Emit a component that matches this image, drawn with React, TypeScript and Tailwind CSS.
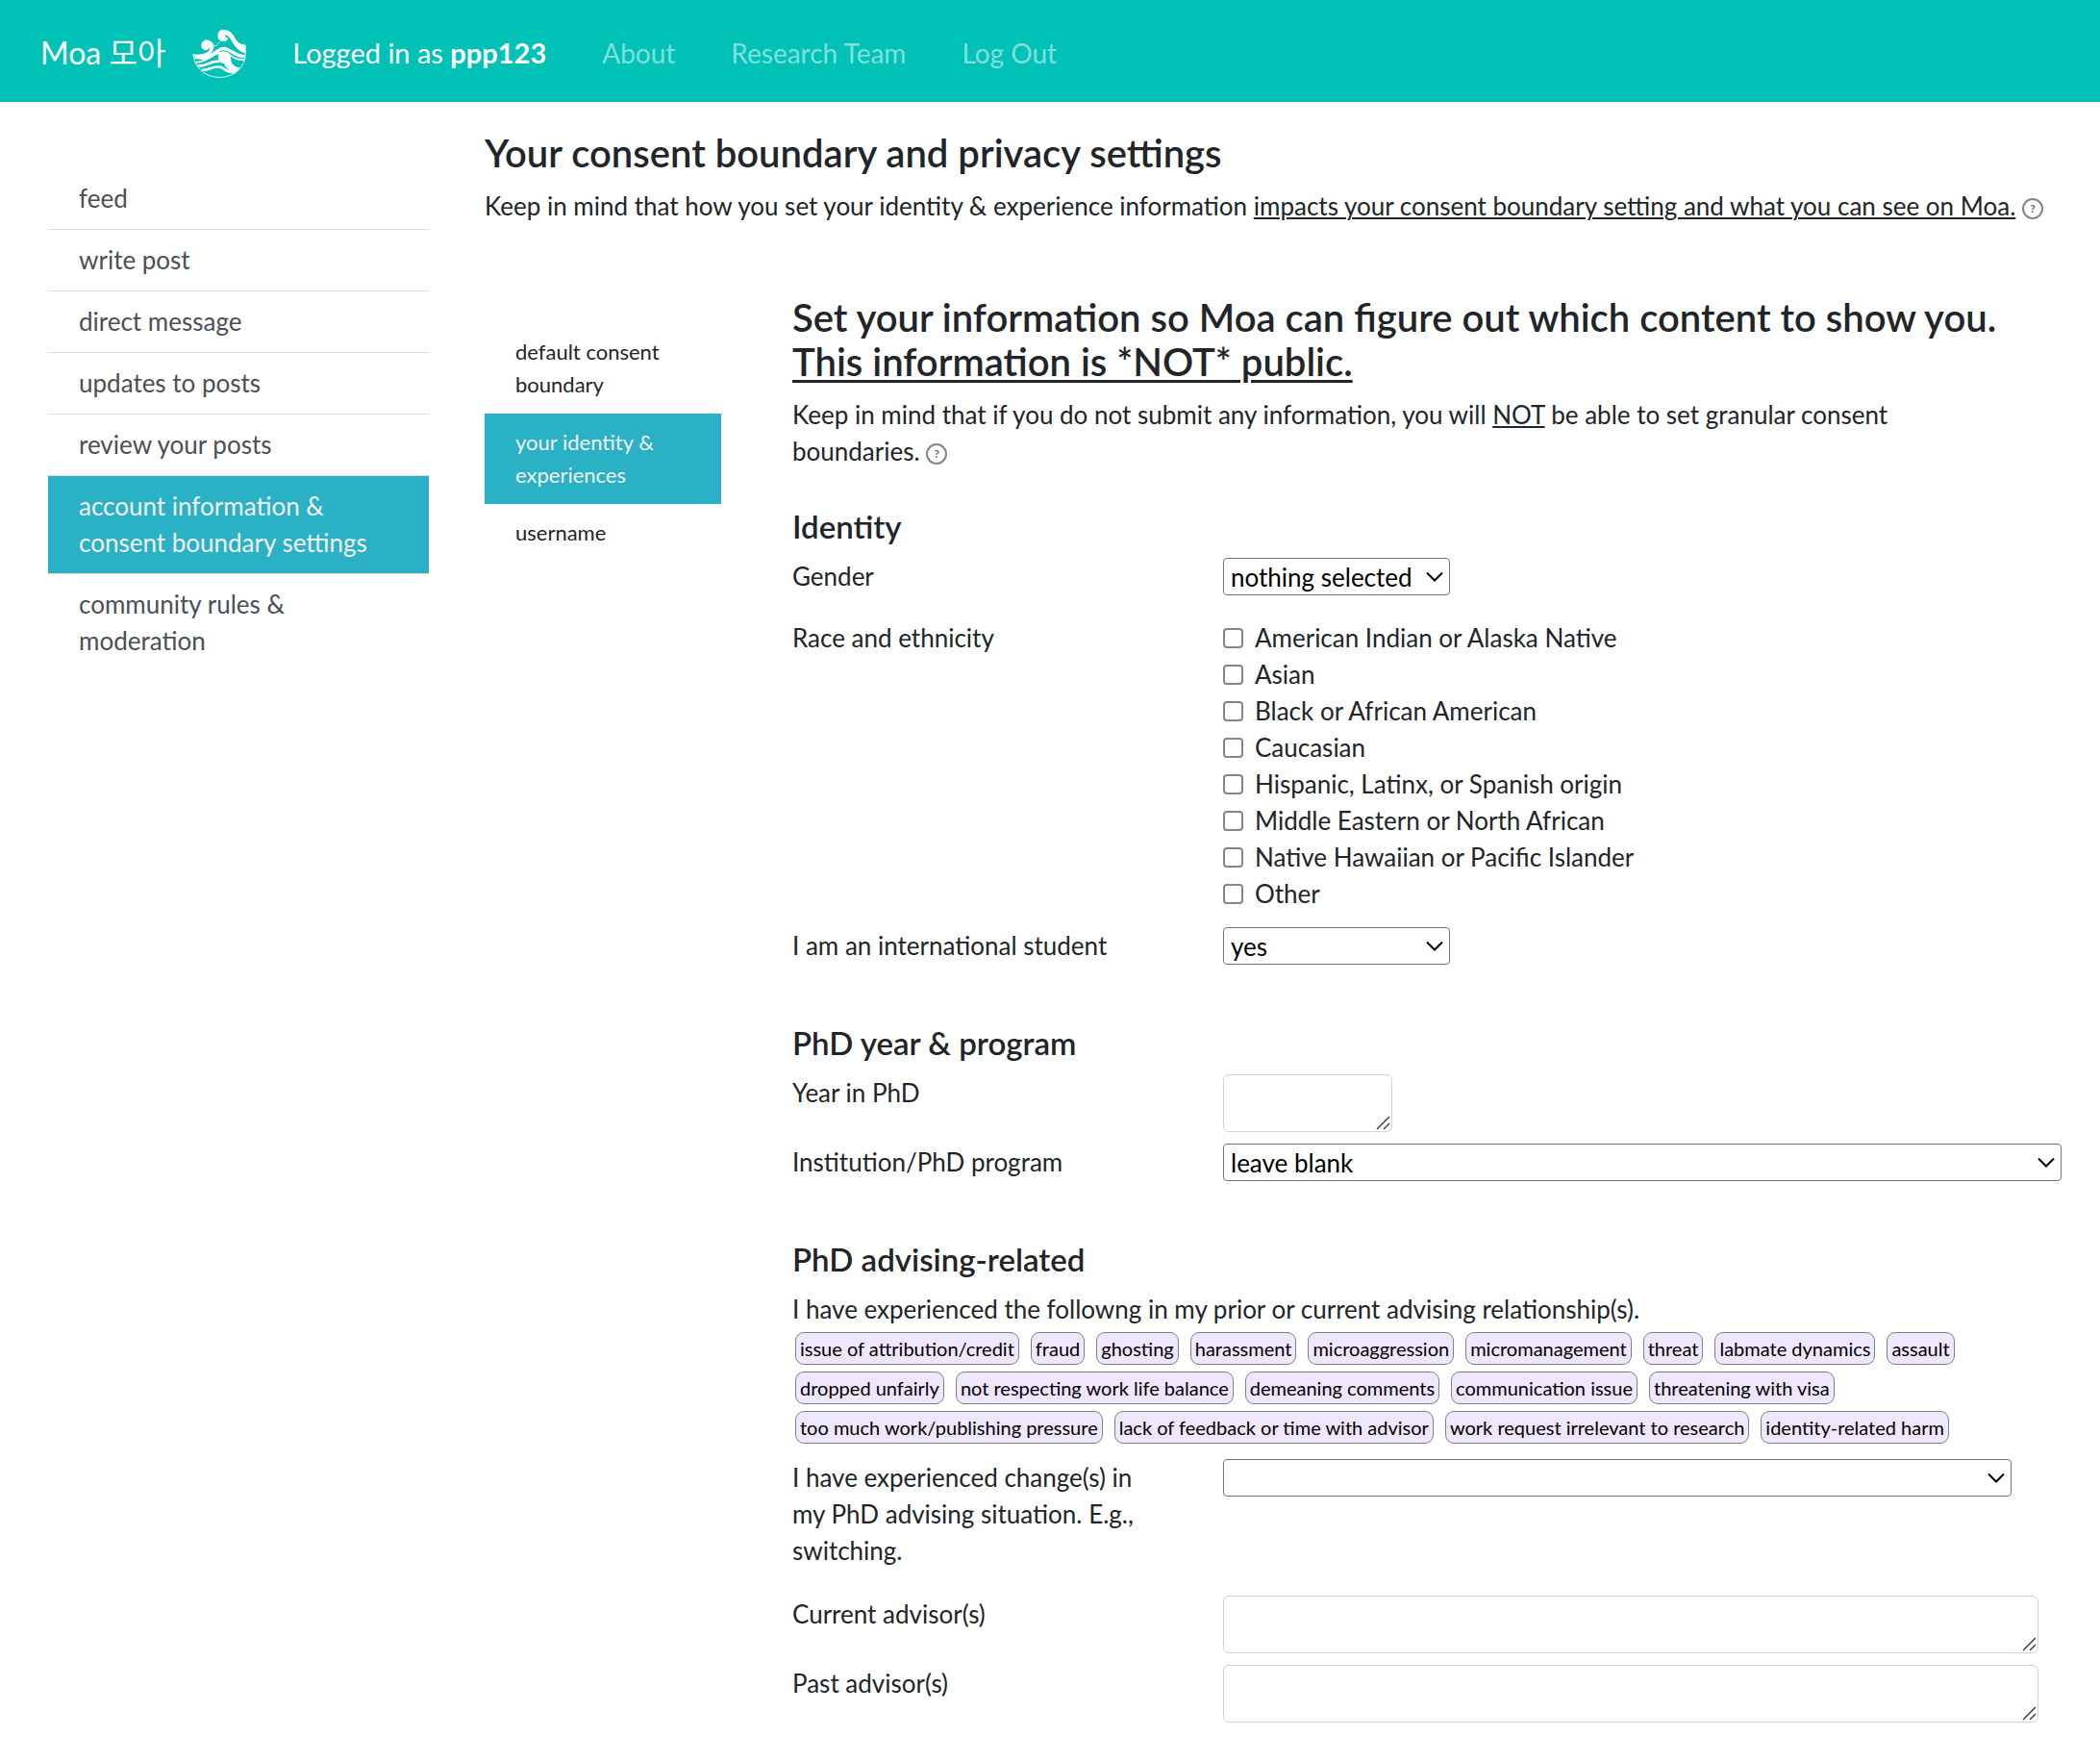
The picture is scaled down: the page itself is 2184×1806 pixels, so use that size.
import { useState } from "react";
import type { ReactNode } from "react";
import clsx from "clsx";

const menu = [
  "feed",
  "write post",
  "direct message",
  "updates to posts",
  "review your posts",
  "account information & consent boundary settings",
  "community rules & moderation",
];

const settingsMenu = ["default consent boundary", "your identity & experiences", "username"];

const races = [
  "American Indian or Alaska Native",
  "Asian",
  "Black or African American",
  "Caucasian",
  "Hispanic, Latinx, or Spanish origin",
  "Middle Eastern or North African",
  "Native Hawaiian or Pacific Islander",
  "Other",
];

const experiences = [
  "issue of attribution/credit",
  "fraud",
  "ghosting",
  "harassment",
  "microaggression",
  "micromanagement",
  "threat",
  "labmate dynamics",
  "assault",
  "dropped unfairly",
  "not respecting work life balance",
  "demeaning comments",
  "communication issue",
  "threatening with visa",
  "too much work/publishing pressure",
  "lack of feedback or time with advisor",
  "work request irrelevant to research",
  "identity-related harm",
];

const WaveLogo = () => (
  <svg viewBox="11 10 169 153" className="h-[51px] w-14" fill="none" stroke="#fff" strokeLinecap="round">
    <path d="M14 90 A82 74 0 0 0 176 104 Q180 84 177 62" strokeWidth="2.5" />
    {/* top wave */}
    <path
      d="M108 12 C128 12 138 26 145 38 C153 52 162 59 178 59 L177 86 C156 80 146 66 138 53 C132 42 126 30 114 29 C113 35 119 38 124 38 C122 46 115 50 107 49 C96 48 90 40 91 29 C92 19 99 12 108 12 Z"
      fill="#fff"
      stroke="none"
    />
    {/* left wave */}
    <path
      d="M55 44 C70 44 80 56 79 68 C78 76 74 82 68 86 C80 84 92 66 110 66 C130 66 144 88 177 92 L177 101 C144 102 130 78 110 77 C92 76 84 102 54 106 C40 107 28 102 20 104 L13 88 C26 92 40 90 52 86 C62 83 68 76 65 68 C63 74 60 77 55 77 C45 76 38 69 39 60 C40 51 47 44 55 44 Z"
      fill="#fff"
      stroke="none"
    />
    <path d="M79 64 Q90 66 96 52" strokeWidth="2" />
    <path d="M24 114 C54 116 66 92 94 86 C118 78 132 96 146 102 Q160 108 174 106" strokeWidth="5" />
    {/* front wave */}
    <path
      d="M110 80 C124 80 132 90 132 101 C132 118 142 130 162 132 L150 145 C128 144 114 132 112 118 C100 118 92 110 92 99 C92 88 100 80 110 80 Z"
      fill="#fff"
      stroke="none"
    />
    <path d="M31 125 C58 130 66 108 93 112" strokeWidth="8" />
    <path d="M44 139 C70 138 78 122 104 131 Q122 146 144 146" strokeWidth="8" />
  </svg>
);

const Help = () => (
  <button
    type="button"
    aria-label="Help"
    className="inline-flex size-[22px] items-center justify-center rounded-full border-2 border-[#858585] align-middle text-[12px] leading-none font-bold text-[#6c6c6c]"
  >
    ?
  </button>
);

const Select = ({ id, options, className }: { id: string; options: string[]; className: string }) => (
  <div className={clsx("relative", className)}>
    <select
      id={id}
      className="block h-[39px] w-full appearance-none rounded-[4px] border border-[#767676] bg-white pl-[7px] text-[26px] leading-[36px] text-black"
    >
      {options.map((option) => (
        <option key={option}>{option}</option>
      ))}
    </select>
    <svg
      viewBox="0 0 18 12"
      className="pointer-events-none absolute top-[14px] right-[7px] h-3 w-[18px]"
      fill="none"
      stroke="#000"
      strokeWidth="2"
    >
      <path d="M1 1.5 L9 9.5 L17 1.5" />
    </svg>
  </div>
);

const TextArea = ({ id, className }: { id: string; className: string }) => (
  <div className={clsx("relative", className)}>
    <textarea
      id={id}
      rows={1}
      className="block h-[60px] w-full resize-none rounded-[6px] border border-[#ced4da] bg-white px-5 py-2 text-[26px]"
    />
    <svg
      viewBox="0 0 15 15"
      className="pointer-events-none absolute right-[2px] bottom-[2px] size-[15px]"
      stroke="#444"
      strokeWidth="1.5"
    >
      <path d="M1 14 L14 1 M8 14 L14 8" />
    </svg>
  </div>
);

const Row = ({ id, label, className, children }: { id: string; label: string; className?: string; children: ReactNode }) => (
  <div className={clsx("flex items-start", className)}>
    <div className="w-[448px] shrink-0 pr-14">
      <label htmlFor={id}>{label}</label>
    </div>
    {children}
  </div>
);

const Heading = ({ children, className }: { children: ReactNode; className: string }) => (
  <h3 className={clsx("mb-[14px] text-[33px] leading-[38px] font-semibold", className)}>{children}</h3>
);

export default function App() {
  const [page, setPage] = useState(menu[5]);
  const [tab, setTab] = useState(settingsMenu[1]);

  return (
    <div className="min-h-screen bg-white font-['Lato','Noto_Sans_CJK_KR',sans-serif] text-[26px] leading-[38px] text-[#212529]">
      <nav className="flex h-[106px] items-center bg-[#00c1b6] pt-1 pl-[42px] text-white">
        <a href="#" className="mr-7 text-[32px]">
          Moa 모아
        </a>
        <a href="#" aria-label="Moa home" className="mr-12">
          <WaveLogo />
        </a>
        <div className="flex items-center gap-[58px] text-[28px]">
          <span className="text-[29px]">
            Logged in as <b>ppp123</b>
          </span>
          <a href="#" className="text-white/50">About</a>
          <a href="#" className="text-white/50">Research Team</a>
          <a href="#" className="text-white/50">Log Out</a>
        </div>
      </nav>

      <div className="flex items-start pr-5 pl-[50px]">
        <ul className="mt-[69px] mr-[58px] w-[396px] shrink-0">
          {menu.map((item) => (
            <li key={item} className="border-b border-[#dfdfdf] last:border-b-0">
              <button
                type="button"
                onClick={() => setPage(item)}
                className={clsx(
                  "block w-full px-8 pt-3 pb-[13px] text-left",
                  item === page ? "bg-[#2bb1c5] text-[#f1f1f1]" : "text-[#495057]",
                )}
              >
                {item}
              </button>
            </li>
          ))}
        </ul>

        <main className="min-w-0 flex-1 pt-[30px]">
          <h1 className="text-[40px] leading-[46px] font-semibold">Your consent boundary and privacy settings</h1>
          <p className="mt-[13px]">
            Keep in mind that how you set your identity & experience information{" "}
            <u className="decoration-2 underline-offset-2">
              impacts your consent boundary setting and what you can see on Moa.
            </u>{" "}
            <Help />
          </p>

          <div className="mt-[74px] flex items-start pr-5">
            <ul className="mt-[29px] mr-[74px] w-[246px] shrink-0 text-[22px] leading-[34px]">
              {settingsMenu.map((item) => (
                <li key={item}>
                  <button
                    type="button"
                    onClick={() => setTab(item)}
                    className={clsx(
                      "block w-full px-8 py-[13px] text-left",
                      item === tab && "bg-[#2bb1c5] text-[#f1f1f1]",
                    )}
                  >
                    {item}
                  </button>
                </li>
              ))}
            </ul>

            <form className="min-w-0 flex-1">
              <h2 className="text-[40px] leading-[46px] font-semibold">
                Set your information so Moa can figure out which content to show you.
                <br />
                <u className="decoration-[3px] underline-offset-4">This information is *NOT* public.</u>
              </h2>
              <p className="mt-[13px] pr-16">
                Keep in mind that if you do not submit any information, you will{" "}
                <u className="decoration-2 underline-offset-2">NOT</u> be able to set granular consent boundaries.{" "}
                <Help />
              </p>

              <Heading className="mt-10">Identity</Heading>
              <Row id="gender" label="Gender" className="mb-[25px]">
                <Select id="gender" className="w-[236px]" options={["nothing selected", "woman", "man", "non-binary"]} />
              </Row>
              <fieldset className="mb-4 flex items-start">
                <legend className="float-left w-[448px] shrink-0">Race and ethnicity</legend>
                <div>
                  {races.map((race) => (
                    <label key={race} className="flex items-center">
                      <input
                        type="checkbox"
                        className="mr-3 size-[21px] appearance-none rounded-[4px] border-2 border-[#858585] bg-white checked:bg-[#2bb1c5]"
                      />
                      {race}
                    </label>
                  ))}
                </div>
              </fieldset>
              <Row id="international" label="I am an international student">
                <Select id="international" className="w-[236px]" options={["yes", "no"]} />
              </Row>

              <Heading className="mt-[62px]">PhD year & program</Heading>
              <Row id="year" label="Year in PhD" className="mb-3">
                <TextArea id="year" className="w-[176px]" />
              </Row>
              <Row id="program" label="Institution/PhD program">
                <Select id="program" className="flex-1" options={["leave blank"]} />
              </Row>

              <Heading className="mt-[62px]">PhD advising-related</Heading>
              <p>I have experienced the followng in my prior or current advising relationship(s).</p>
              <div className="mt-[5px] mb-4 flex flex-wrap gap-x-3 gap-y-[7px] pr-10 pl-[3px]">
                {experiences.map((experience) => (
                  <button
                    key={experience}
                    type="button"
                    className="h-[34px] rounded-[9px] border border-[#808080] bg-[#efe7fd] px-1 text-[20px] leading-8 text-black"
                  >
                    {experience}
                  </button>
                ))}
              </div>
              <Row
                id="changes"
                label="I have experienced change(s) in my PhD advising situation. E.g., switching."
                className="mb-7"
              >
                <Select id="changes" className="w-[820px]" options={[""]} />
              </Row>
              <Row id="current" label="Current advisor(s)" className="mb-3">
                <TextArea id="current" className="w-[848px]" />
              </Row>
              <Row id="past" label="Past advisor(s)">
                <TextArea id="past" className="w-[848px]" />
              </Row>
            </form>
          </div>
        </main>
      </div>
    </div>
  );
}
